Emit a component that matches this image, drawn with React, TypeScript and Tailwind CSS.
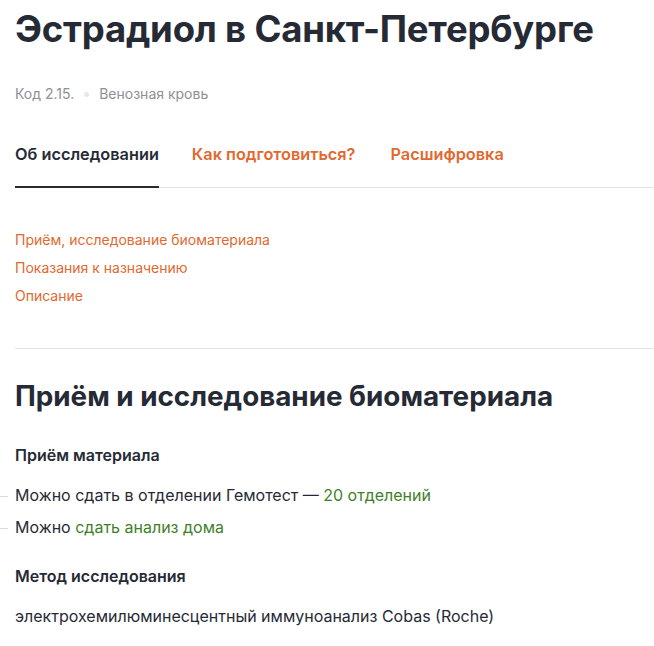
const tabs = [
  { label: "Об исследовании", active: true },
  { label: "Как подготовиться?", active: false },
  { label: "Расшифровка", active: false },
];

const anchors = [
  "Приём, исследование биоматериала",
  "Показания к назначению",
  "Описание",
];

export default function App() {
  return (
    <div
      className="min-h-screen bg-white pl-[15px] text-[#262a35]"
      style={{ fontFamily: "Inter, 'Noto Sans', sans-serif" }}
    >
      <h1 className="pt-[4px] text-[36.5px] font-bold leading-[50px] tracking-[-0.2px]">
        Эстрадиол в Санкт-Петербурге
      </h1>

      {/* meta */}
      <div className="mt-[30px] flex items-center text-[14px] leading-[20px] text-[#8e9096]">
        <span>Код 2.15.</span>
        <span className="mx-[10px] h-[5px] w-[5px] rounded-full bg-[#e6e7e9]" />
        <span>Венозная кровь</span>
      </div>

      {/* tabs */}
      <div className="mt-[40px] flex border-b border-[#e3e4e6]">
        {tabs.map((t) => (
          <div
            key={t.label}
            className={
              t.active
                ? "-mb-px mr-[33px] border-b-2 border-[#262a35] pb-[22px] text-[16.3px] font-semibold leading-[20px]"
                : "mr-[35px] pb-[22px] text-[16.3px] font-semibold leading-[20px] text-[#e0692f]"
            }
          >
            {t.label}
          </div>
        ))}
      </div>

      {/* anchors */}
      <div className="mt-[42px] flex flex-col gap-[8px] pb-[42px] text-[14px] leading-[20px] text-[#e0692f]">
        {anchors.map((a) => (
          <span key={a}>{a}</span>
        ))}
      </div>

      <hr className="border-[#e3e4e6]" />

      <h2 className="mt-[27px] text-[27.8px] font-bold leading-[40px]">
        Приём и исследование биоматериала
      </h2>

      <div className="mt-[29px] text-[16px] font-semibold leading-[20px]">
        Приём материала
      </div>
      <ul className="mt-[20px] flex flex-col gap-[12px] text-[16px] leading-[20px]">
        <li className="relative">
          <span className="absolute left-[-15px] top-[11px] h-px w-[8px] bg-[#d9dadc]" />
          Можно сдать в отделении Гемотест —{" "}
          <span className="text-[#3f7f2b]">20 отделений</span>
        </li>
        <li className="relative">
          <span className="absolute left-[-15px] top-[11px] h-px w-[8px] bg-[#d9dadc]" />
          Можно <span className="text-[#3f7f2b]">сдать анализ дома</span>
        </li>
      </ul>

      <div className="mt-[29px] text-[16px] font-semibold leading-[20px]">
        Метод исследования
      </div>
      <p className="mt-[20px] text-[16px] leading-[20px]">
        электрохемилюминесцентный иммуноанализ Cobas (Roche)
      </p>
    </div>
  );
}
